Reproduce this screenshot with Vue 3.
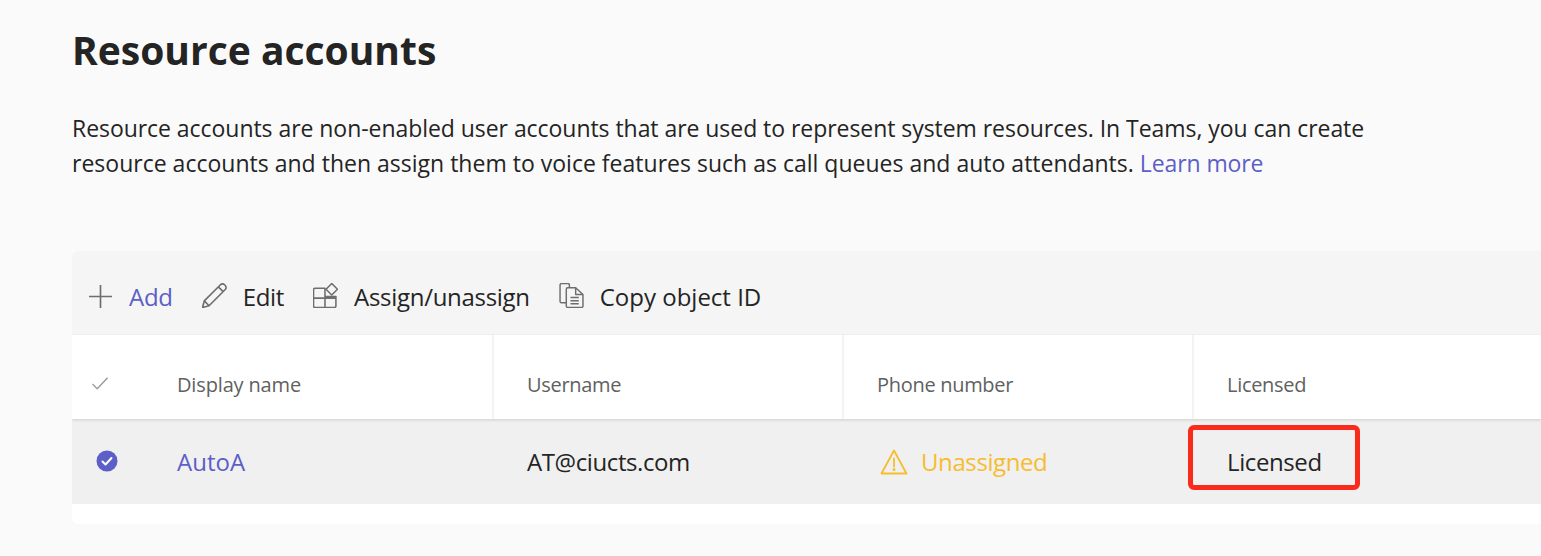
<script setup>
const columns = [
  { key: 'name', label: 'Display name' },
  { key: 'user', label: 'Username' },
  { key: 'phone', label: 'Phone number' },
  { key: 'lic', label: 'Licensed' }
]
</script>

<template>
  <main class="page">
    <h1 class="title">Resource accounts</h1>
    <p class="desc">
      <span class="line-one">Resource accounts are non-enabled user accounts that are used to represent system resources. In Teams, you can create</span><br />
      <span class="line-two">resource accounts and then assign them to voice features such as call queues and auto attendants.</span> <a class="link">Learn more</a>
    </p>
    <section class="card">
      <div class="toolbar">
        <div class="tool add">
          <svg class="ico plus" viewBox="0 0 24 24" fill="none" stroke="#6e6e6e" stroke-width="1.6"><path d="M12 1v22M1 12h22" /></svg>
          <span>Add</span>
        </div>
        <div class="tool">
          <svg class="ico" viewBox="1.500 1.500 23 23" fill="none" stroke="#6e6e6e" stroke-width="1.500" stroke-linejoin="round"><path d="M2 24l1.600-6L18.500 3.100a2.600 2.600 0 0 1 3.700 0l.7.7a2.600 2.600 0 0 1 0 3.700L8 22.400z" /><path d="M16.500 5l4.500 4.500M3.600 18L8 22.400" /></svg>
          <span>Edit</span>
        </div>
        <div class="tool">
          <svg class="ico" viewBox="1 1 24 24" fill="none" stroke="#6e6e6e" stroke-width="1.500" stroke-linejoin="round"><path d="M12.500 6H3a1.500 1.500 0 0 0-1.500 1.500V23A1.500 1.500 0 0 0 3 24.500h18.500A1.500 1.500 0 0 0 23 23V14H12.500zM12.500 6v18.500M1.500 15.500h21.500" /><path d="M19 1.500l5.500 5.500-5.500 5.500-5.500-5.500z" /></svg>
          <span>Assign/unassign</span>
        </div>
        <div class="tool copy">
          <svg class="ico" viewBox="1.500 1 23 24" fill="none" stroke="#6e6e6e" stroke-width="1.400" stroke-linejoin="round"><path d="M8 20H3.500A1.500 1.500 0 0 1 2 18.500V3a1.500 1.500 0 0 1 1.500-1.500h6A1.500 1.500 0 0 1 11 3v2.500" /><path d="M8 7a1.500 1.500 0 0 1 1.500-1.500H17l7 6.500v11a1.500 1.500 0 0 1-1.500 1.500h-13A1.500 1.500 0 0 1 8 23z" /><path d="M17 5.500V12h7M12 15h8M12 18h8M12 21h8" /></svg>
          <span>Copy object ID</span>
        </div>
      </div>
      <div class="grid head">
        <div class="check-cell">
          <svg class="head-check" viewBox="0.500 0.500 17 13" fill="none" stroke="#9e9e9e" stroke-width="1.500"><path d="M1 7.500l5 5L17 1" /></svg>
        </div>
        <div v-for="c in columns" :key="c.key" class="hcell">{{ c.label }}</div>
      </div>
      <div class="grid row">
        <div class="check-cell">
          <svg class="row-check" viewBox="0 0 22 22"><circle cx="11" cy="11" r="10.500" fill="#5b5fc7" /><path d="M6.500 11.500l3 3 6-6.500" fill="none" stroke="#fff" stroke-width="2" stroke-linecap="round" stroke-linejoin="round" /></svg>
        </div>
        <div class="cell name">AutoA</div>
        <div class="cell">AT@ciucts.com</div>
        <div class="cell warn">
          <svg class="warn-ico" viewBox="0 0 28 26" fill="none" stroke="#f5bd2f" stroke-width="1.800" stroke-linejoin="round" stroke-linecap="round"><path d="M14 1.500L1.500 24.500h25z" /><path d="M14 9.500v8" /><circle cx="14" cy="20.500" r=".6" fill="#f5bd2f" /></svg>
          <span>Unassigned</span>
        </div>
        <div class="cell">Licensed</div>
      </div>
      <div class="foot"></div>
      <div class="callout"></div>
    </section>
  </main>
</template>

<style scoped>
.page {
  width: 1541px;
  height: 556px;
  box-sizing: border-box;
  overflow: hidden;
  background: #fafafa;
  padding: 25px 0 0 72px;
  font-family: "Open Sans", "Noto Sans", sans-serif;
  color: #242424;
}
.title {
  margin: 0;
  font-size: 39px;
  line-height: 50px;
  font-weight: 700;
  letter-spacing: 0;
}
.desc {
  margin: 36px 0 0;
  font-size: 23px;
  line-height: 35px;
}
.line-one {
  letter-spacing: -0.05px;
}
.line-two {
  letter-spacing: 0.01px;
}
.link {
  color: #5b5fc7;
  letter-spacing: -0.1px;
}
.card {
  position: relative;
  margin-top: 70px;
  background: #fff;
  border-radius: 6px 0 0 6px;
  overflow: hidden;
}
.toolbar {
  height: 84px;
  background: #f5f5f5;
  display: flex;
  align-items: center;
  padding: 6px 0 0 16px;
  box-sizing: border-box;
  gap: 29px;
  font-size: 24px;
  letter-spacing: -0.3px;
}
.tool {
  display: flex;
  align-items: center;
  gap: 16px;
}
.add {
  color: #5b5fc7;
}
.copy {
  letter-spacing: 0;
}
.ico {
  width: 25px;
  height: 25px;
  margin-bottom: 2px;
}
.plus {
  margin-bottom: 0;
}
.grid {
  display: grid;
  grid-template-columns: 422px 350px 350px 1fr;
}
.check-cell {
  position: absolute;
  left: 0;
  top: 0;
}
.head {
  position: relative;
  z-index: 1;
  height: 84px;
  background: #fff;
  box-shadow: 0 1px 3px rgba(0, 0, 0, 0.14);
  font-size: 20px;
  color: #616161;
  letter-spacing: -0.3px;
}
.hcell {
  display: flex;
  align-items: center;
  padding: 15px 0 0 33px;
  border-right: 2px solid #f3f3f3;
}
.hcell:nth-child(2) {
  padding-left: 105px;
  letter-spacing: -0.15px;
}
.hcell:last-child {
  border-right: 0;
}
.head-check {
  position: absolute;
  left: 20px;
  top: 42px;
  width: 16px;
  height: 13px;
}
.row {
  position: relative;
  height: 85px;
  background: #f0f0f0;
  font-size: 24px;
  letter-spacing: -0.4px;
}
.cell {
  display: flex;
  align-items: center;
  padding-left: 33px;
}
.row .name {
  padding-left: 105px;
  color: #5b5fc7;
  letter-spacing: 0;
}
.row-check {
  position: absolute;
  left: 24px;
  top: 31px;
  width: 22px;
  height: 22px;
}
.row .warn {
  color: #f5bd2f;
  gap: 13px;
  padding-left: 36px;
}
.warn-ico {
  width: 28px;
  height: 26px;
}
.foot {
  height: 20px;
  background: #fff;
}
.callout {
  position: absolute;
  left: 1116px;
  top: 174px;
  width: 172px;
  height: 65px;
  box-sizing: border-box;
  border: 5px solid #fa2a1c;
  border-radius: 6px;
  z-index: 2;
}
</style>
